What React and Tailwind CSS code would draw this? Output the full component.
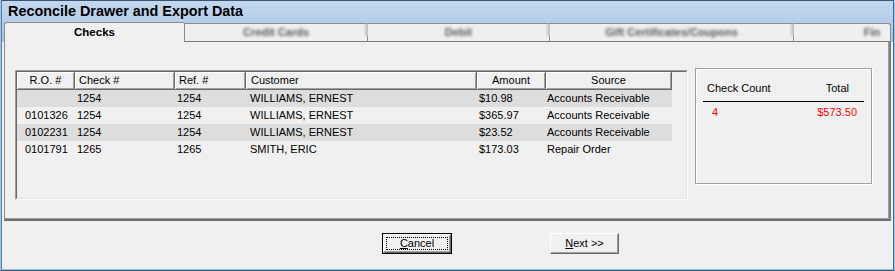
import React from "react";

const cols = [
  { label: "R.O. #", w: 58, hAlign: "justify-center", hp: "", cp: "pl-[8px]" },
  { label: "Check #", w: 100, hAlign: "justify-start", hp: "pl-[4px]", cp: "pl-[2px]" },
  { label: "Ref. #", w: 71, hAlign: "justify-start", hp: "pl-[4px]", cp: "pl-[2px]" },
  { label: "Customer", w: 231, hAlign: "justify-start", hp: "pl-[5px]", cp: "pl-[4px]" },
  { label: "Amount", w: 69, hAlign: "justify-center", hp: "", cp: "pl-[2px]" },
  { label: "Source", w: 126, hAlign: "justify-center", hp: "", cp: "pl-[1px]" },
];

const rows = [
  { stripe: true, c: ["", "1254", "1254", "WILLIAMS, ERNEST", "$10.98", "Accounts Receivable"] },
  { stripe: false, c: ["0101326", "1254", "1254", "WILLIAMS, ERNEST", "$365.97", "Accounts Receivable"] },
  { stripe: true, c: ["0102231", "1254", "1254", "WILLIAMS, ERNEST", "$23.52", "Accounts Receivable"] },
  { stripe: false, c: ["0101791", "1265", "1265", "SMITH, ERIC", "$173.03", "Repair Order"] },
];

const tabs = [
  { label: "Credit Cards", w: 183 },
  { label: "Debit", w: 182 },
  { label: "Gift Certificates/Coupons", w: 244 },
  { label: "Fin", w: 0 },
];

export default function App() {
  return (
    <div className="w-[895px] h-[271px] bg-[#f0f0f0] font-['Liberation_Sans',Arial,sans-serif] text-[11px] text-black border-l border-r border-b border-l-[#9cc5e8] border-r-[#9cc5e8] border-b-[#3a5a78] flex flex-col overflow-hidden">
      <div className="flex-1 flex flex-col border-l border-r border-b border-l-[#5b7fa3] border-r-[#46678a] border-b-[#8fc6ec]">
        {/* Title + tab strip */}
        <div className="h-[42px] bg-gradient-to-b from-[#c3d8ee] to-[#a8c4e2] border-t border-[#3b5470] flex flex-col">
          <div className="h-[21px] flex items-center pl-[6px]">
            <span className="text-[14.4px] font-bold leading-none text-black">Reconcile Drawer and Export Data</span>
          </div>
          <div className="h-[20px] flex items-end mx-[2px]">
            <div className="w-[181px] h-[20px] bg-[#f0f0f0] border-t border-l border-r border-[#8c8c8c] rounded-tl-[3px] rounded-tr-[2px] flex items-center justify-center pt-[1px]">
              <span className="font-bold text-[11.5px]">Checks</span>
            </div>
            {tabs.map((t, i) => (
              <div
                key={i}
                className={`relative h-[19px] bg-[#efefef] border-t border-b border-r border-t-[#8c8c8c] border-b-[#7a7a7a] border-r-[#8c8c8c] flex items-center justify-center ${t.w ? "" : "flex-1 rounded-tr-[3px]"}`}
                style={t.w ? { width: t.w } : undefined}
              >
                <span className={`blur-[1.4px] font-bold text-[#5a5a5a] ${t.w ? "" : "ml-[60px]"}`}>{t.label}</span>
                {t.w ? (
                  <div className="absolute right-[-3px] top-[0px] w-[5px] h-[12px] bg-[#c4c4c4] blur-[1px]" />
                ) : null}
              </div>
            ))}
          </div>
        </div>

        {/* Tab panel */}
        <div className="h-[179px] mx-[2px] border-l border-r-2 border-b-2 border-l-[#8f8f8f] border-r-[#7d7d7d] border-b-[#6e6e6e] shadow-[inset_-1px_-1px_0_#a0a0a0] flex items-start">
          {/* Grid */}
          <div className="ml-[10px] mt-[28px] w-[673px] h-[130px] border-t border-l border-[#a0a0a0] border-b border-r border-b-white border-r-white">
            <div className="w-full h-full border-t border-l border-[#696969] border-b border-r border-b-[#e3e3e3] border-r-[#e3e3e3] bg-[#f0f0f0]">
              <div className="flex h-[18px]">
                {cols.map((c, i) => (
                  <div
                    key={i}
                    className={`h-[18px] flex items-center ${c.hAlign} ${c.hp} border-r border-b border-[#696969] shadow-[inset_1px_1px_0_#fff,inset_-1px_-1px_0_#a0a0a0] leading-none`}
                    style={{ width: c.w }}
                  >
                    {c.label}
                  </div>
                ))}
              </div>
              {rows.map((r, ri) => (
                <div key={ri} className={`flex h-[17px] w-[655px] ${r.stripe ? "bg-[#dddddd]" : ""}`}>
                  {r.c.map((v, ci) => (
                    <div
                      key={ci}
                      className={`h-[17px] leading-[17px] whitespace-nowrap overflow-hidden ${cols[ci].cp}`}
                      style={{ width: cols[ci].w }}
                    >
                      {v}
                    </div>
                  ))}
                </div>
              ))}
            </div>
          </div>

          {/* Summary box */}
          <div className="ml-[7px] mt-[26px] w-[177px] h-[116px] border border-[#a0a0a0] shadow-[1px_1px_0_#fff,inset_1px_1px_0_#fff] flex flex-col">
            <div className="mt-[13px] h-[13px] flex justify-between items-center pl-[11px] pr-[22px] leading-none">
              <span>Check Count</span>
              <span>Total</span>
            </div>
            <div className="mx-[7px] mt-[6px] border-t border-black" />
            <div className="mt-[4px] h-[13px] flex justify-between items-center pl-[16px] pr-[14px] leading-none text-[#ff0000]">
              <span>4</span>
              <span>$573.50</span>
            </div>
          </div>
        </div>

        {/* Buttons */}
        <div className="flex-1 flex items-start pt-[12px] pl-[380px] gap-[98px]">
          <button className="w-[70px] h-[21px] border border-black bg-[#f0f0f0] p-0 flex">
            <div className="flex-1 border-t border-l border-white border-b border-r border-b-[#696969] border-r-[#696969] shadow-[inset_-1px_-1px_0_#a0a0a0] p-[2px] flex">
              <div className="flex-1 border border-dotted border-black flex items-center justify-center leading-none text-[11px]">
                <span><span className="underline">C</span>ancel</span>
              </div>
            </div>
          </button>
          <button className="w-[69px] h-[21px] bg-[#f0f0f0] p-0 border-t border-l border-white border-b border-r border-b-[#696969] border-r-[#696969] shadow-[inset_-1px_-1px_0_#a0a0a0] flex items-center justify-center leading-none text-[11px]">
            <span><span className="underline">N</span>ext &gt;&gt;</span>
          </button>
        </div>
      </div>
    </div>
  );
}
